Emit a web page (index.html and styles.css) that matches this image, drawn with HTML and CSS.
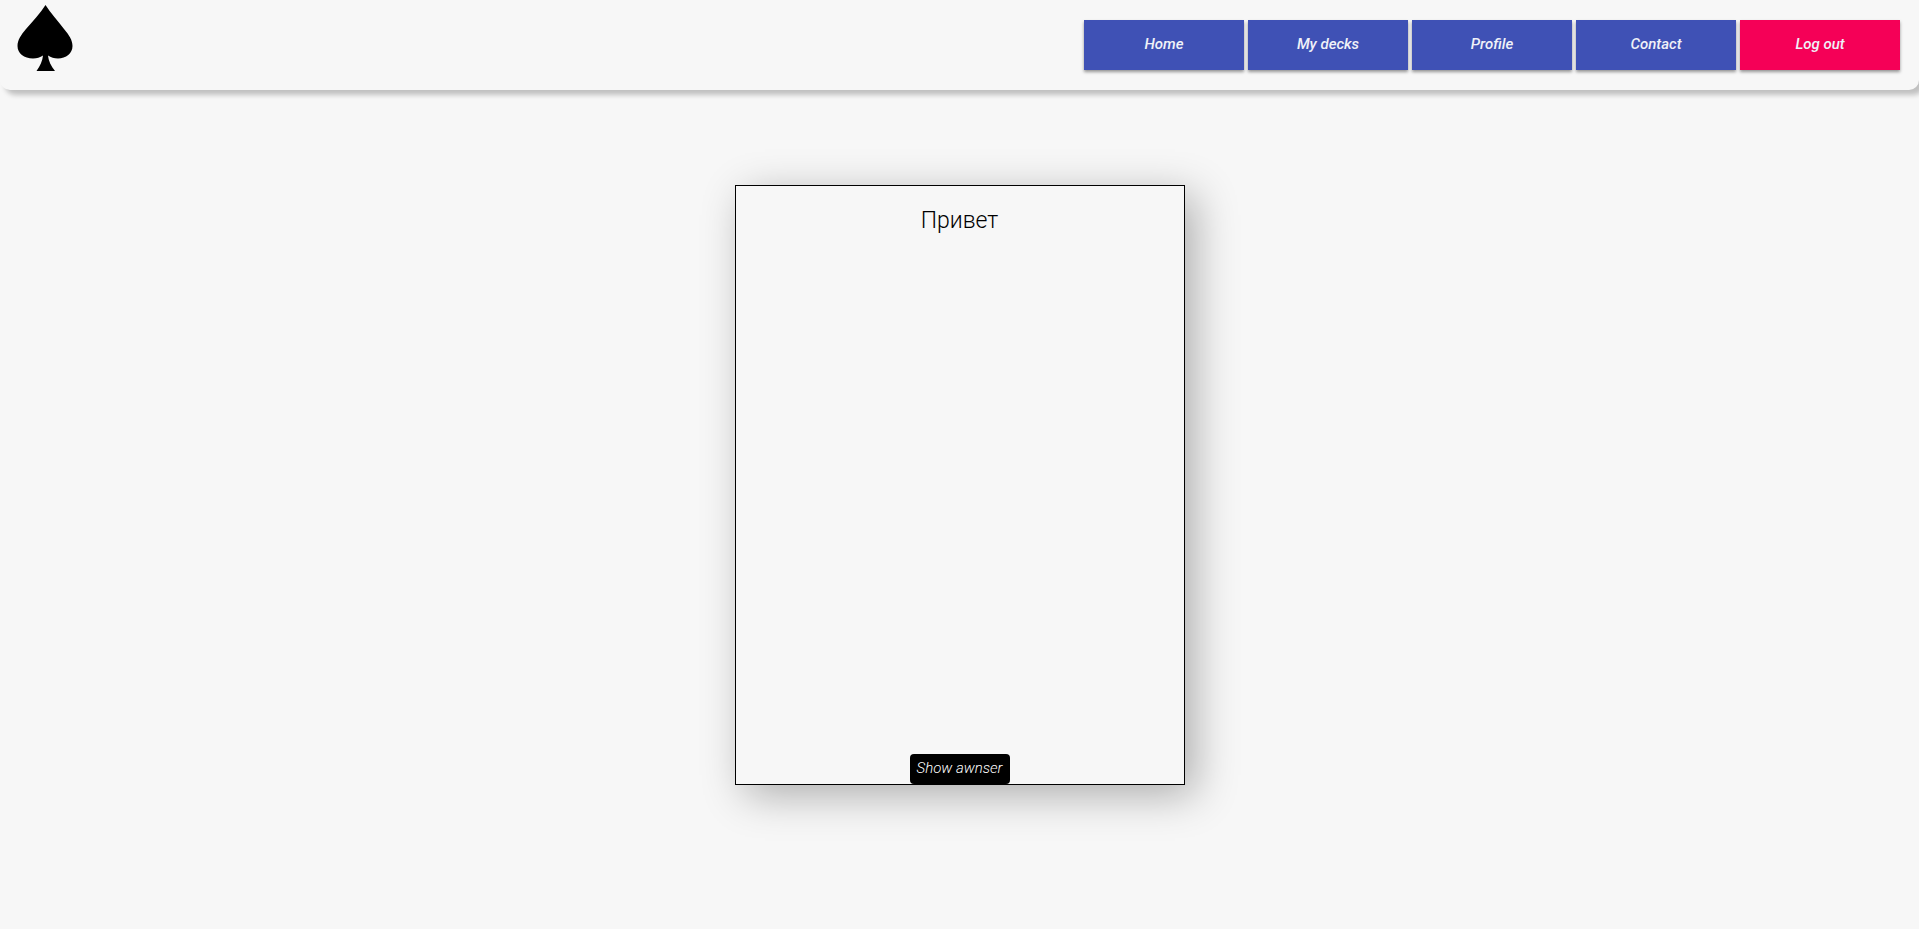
FILE: index.html
```html
<!DOCTYPE html>
<html lang="en">
<head>
  <meta charset="utf-8">
  <meta name="viewport" content="width=device-width, initial-scale=1">
  <title>Flashcards</title>
  <link rel="stylesheet" href="styles.css">
</head>
<body>
  <header class="header">
    <a class="logo" href="#" aria-label="Flashcards">
      <svg class="logo-icon" viewBox="0 0 56 66" aria-hidden="true">
        <path d="M28.500 0C33.500 8 41 16 47 24C52 30 55.500 35 55.500 41C55.500 48.500 49 53.500 41 53.500C37 53.500 34 52.500 31 50.500C31.500 56 34 61 38 66H19.500C23 61 25.500 56 26 50.500C23 52.500 20 53.500 16 53.500C7 53.500 .5 48.500 .5 41C.5 35 4 30 9 24C16 16 23.500 8 28.500 0Z"/>
      </svg>
    </a>
    <nav class="nav">
      <a class="nav-link" href="#">Home</a>
      <a class="nav-link" href="#">My decks</a>
      <a class="nav-link" href="#">Profile</a>
      <a class="nav-link" href="#">Contact</a>
      <button class="nav-link nav-logout" type="button">Log out</button>
    </nav>
  </header>
  <main class="main">
    <article class="card">
      <h1 class="card-word">Привет</h1>
      <button class="card-button" type="button">Show awnser</button>
    </article>
  </main>
</body>
</html>
```
FILE: styles.css
```css
* {
  box-sizing: border-box;
}

body {
  margin: 0;
  min-height: 100vh;
  background: #f7f7f7;
  color: #000;
  font-family: Roboto, "Liberation Sans", sans-serif;
}

.header {
  display: flex;
  align-items: center;
  justify-content: space-between;
  height: 90px;
  padding: 0 19px 0 17px;
  border-radius: 0 0 10px 10px;
  box-shadow: 5px 5px 5px rgba(0, 0, 0, 0.22);
}

.logo {
  align-self: flex-start;
  padding-top: 5px;
}

.logo-icon {
  display: block;
  width: 56px;
  height: 66px;
}

.nav {
  display: flex;
  gap: 4px;
}

.nav-link {
  display: flex;
  align-items: center;
  justify-content: center;
  width: 160px;
  height: 50px;
  padding: 0 0 2px;
  border: 0;
  background: #3f51b5;
  box-shadow: 0 2px 3px rgba(0, 0, 0, 0.4);
  color: #f0f1f8;
  font: italic 500 15px Roboto, "Liberation Sans", sans-serif;
  text-decoration: none;
  cursor: pointer;
}

.nav-logout {
  background: #f50057;
}

.main {
  display: flex;
  justify-content: center;
  padding: 95px 16px;
}

.card {
  display: flex;
  flex-direction: column;
  align-items: center;
  justify-content: space-between;
  width: 450px;
  max-width: 100%;
  min-height: 600px;
  border: 1px solid #000;
  box-shadow: 10px 10px 40px rgba(0, 0, 0, 0.3);
}

.card-word {
  margin: 20px 0;
  font-size: 23px;
  font-weight: 300;
  line-height: 30px;
}

.card-button {
  width: 100px;
  height: 30px;
  padding: 0 0 2px;
  border: 0;
  border-radius: 4px;
  background: #000;
  color: #fff;
  font: italic 300 15px Roboto, "Liberation Sans", sans-serif;
  cursor: pointer;
}
```
